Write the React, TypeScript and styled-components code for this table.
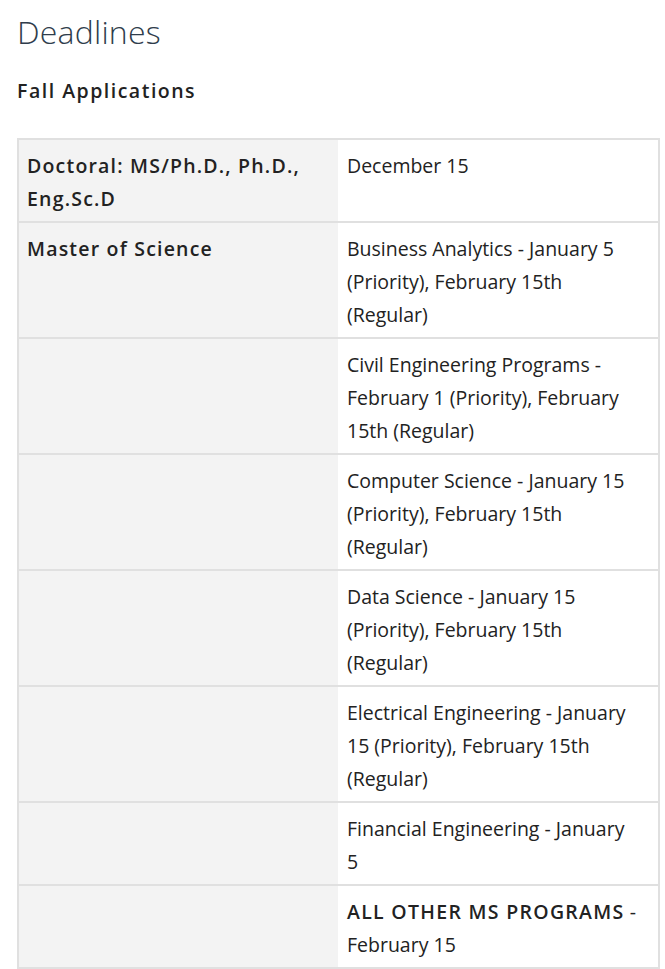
import React from "react";
import styled, { createGlobalStyle } from "styled-components";

const Global = createGlobalStyle`
  html, body { margin: 0; padding: 0; background: #fff; }
  body { font-family: "Open Sans", "Noto Sans", sans-serif; color: #222; }
`;

const Page = styled.div`
  padding: 10px 6px 0 17px;
  width: 665px;
  box-sizing: border-box;
`;

const Title = styled.h1`
  margin: 0;
  font-family: "Open Sans", sans-serif;
  font-weight: 300;
  font-size: 32px;
  line-height: 44px;
  color: #2f3d4c;
  letter-spacing: 0.2px;
`;

const Subtitle = styled.h2`
  margin: 23px 0 0 0;
  font-family: "Open Sans", sans-serif;
  font-weight: 600;
  font-size: 19.5px;
  line-height: 28px;
  color: #222;
  letter-spacing: 1.5px;
`;

const Table = styled.table`
  margin-top: 33px;
  width: 643px;
  border-collapse: collapse;
  border: 2px solid #e0e0e0;
  table-layout: fixed;
`;

const Row = styled.tr`
  border-top: 2px solid #e0e0e0;
`;

const Head = styled.td`
  width: 303px;
  background: #f3f3f3;
  vertical-align: top;
  padding: 9px 8px 6px 8px;
  font-weight: 600;
  font-size: 19.5px;
  line-height: 33px;
  letter-spacing: 1.2px;
  color: #222;
`;

const Cell = styled.td`
  background: #fff;
  vertical-align: top;
  padding: 9px 4px 6px 9px;
  font-size: 19.5px;
  line-height: 33px;
  color: #222;
`;

const Line = styled.span`
  display: block;
  white-space: nowrap;
`;

const Strong = styled.strong`
  font-weight: 600;
  letter-spacing: 1.3px;
`;

const rows: { head: string[]; body: React.ReactNode[] }[] = [
  { head: ["Doctoral: MS/Ph.D., Ph.D.,", "Eng.Sc.D"], body: ["December 15"] },
  { head: ["Master of Science"], body: ["Business Analytics - January 5", "(Priority), February 15th", "(Regular)"] },
  { head: [], body: ["Civil Engineering Programs -", "February 1 (Priority), February", "15th (Regular)"] },
  { head: [], body: ["Computer Science - January 15", "(Priority), February 15th", "(Regular)"] },
  { head: [], body: ["Data Science - January 15", "(Priority), February 15th", "(Regular)"] },
  { head: [], body: ["Electrical Engineering - January", "15 (Priority), February 15th", "(Regular)"] },
  { head: [], body: ["Financial Engineering - January", "5"] },
  { head: [], body: [<><Strong>ALL OTHER MS PROGRAMS</Strong> -</>, "February 15"] },
];

export default function App() {
  return (
    <Page>
      <Global />
      <Title>Deadlines</Title>
      <Subtitle>Fall Applications</Subtitle>
      <Table>
        <tbody>
          {rows.map((r, i) => (
            <Row key={i}>
              <Head>
                {r.head.map((l, j) => (
                  <Line key={j}>{l}</Line>
                ))}
              </Head>
              <Cell>
                {r.body.map((l, j) => (
                  <Line key={j}>{l}</Line>
                ))}
              </Cell>
            </Row>
          ))}
        </tbody>
      </Table>
    </Page>
  );
}
